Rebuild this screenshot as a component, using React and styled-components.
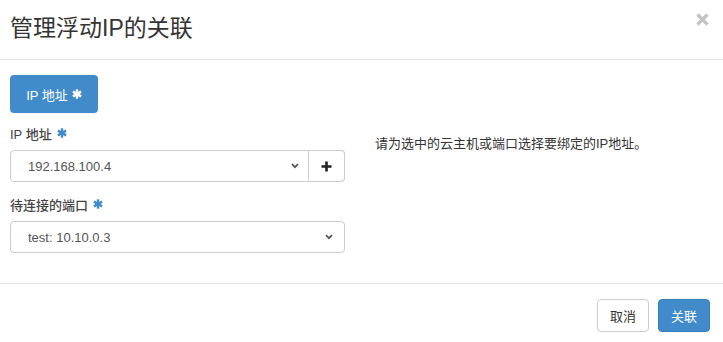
import React from "react";
import styled, { createGlobalStyle } from "styled-components";

const GlobalStyle = createGlobalStyle`
  html, body { margin: 0; padding: 0; background: #fff; }
  body {
    font-family: "Liberation Sans", "Noto Sans CJK SC", Arial, sans-serif;
    font-size: 13px;
    color: #333;
  }
  * { box-sizing: border-box; }
`;

const Modal = styled.div`
  width: 723px;
  background: #fff;
`;

const Header = styled.div`
  display: flex;
  justify-content: space-between;
  align-items: flex-start;
  height: 60px;
  padding: 13px 14px 0 10px;
  border-bottom: 1px solid #e5e5e5;
`;

const Title = styled.h4`
  margin: 0;
  font-size: 23px;
  line-height: 30px;
  font-weight: 400;
  color: #333;
`;

const Close = styled.button`
  display: flex;
  padding: 0;
  margin: 0;
  border: 0;
  background: transparent;
  cursor: pointer;
`;

const Body = styled.div`
  padding: 15px 10px 30px;
`;

const PillButton = styled.div`
  display: inline-flex;
  align-items: center;
  justify-content: center;
  gap: 4px;
  width: 88px;
  height: 38px;
  border-radius: 4px;
  background: #428bca;
  color: #fff;
  font-size: 13px;
`;

const Grid = styled.div`
  display: grid;
  grid-template-columns: 335px 1fr;
  column-gap: 30px;
  margin-top: 11px;
`;

const FormGroup = styled.div`
  margin-bottom: ${(p) => (p.$last ? 0 : 13)}px;
`;

const Label = styled.div`
  display: flex;
  align-items: center;
  gap: 5px;
  height: 18px;
  margin-bottom: 8px;
  font-weight: 500;
  color: #444;
  font-size: 13px;
`;

const InputGroup = styled.div`
  display: flex;
`;

const SelectBox = styled.div`
  flex: 1;
  display: flex;
  align-items: center;
  justify-content: space-between;
  height: 32px;
  padding: 0 ${(p) => (p.$grouped ? 9 : 11)}px 0 17px;
  border: 1px solid #ccc;
  border-radius: ${(p) => (p.$grouped ? "4px 0 0 4px" : "4px")};
  color: #555;
  font-size: 13px;
`;

const AddButton = styled.div`
  display: flex;
  align-items: center;
  justify-content: center;
  width: 36px;
  height: 32px;
  border: 1px solid #ccc;
  border-left: 0;
  border-radius: 0 4px 4px 0;
  background: #fff;
`;

const HelpText = styled.p`
  margin: 0;
  padding-top: 11px;
  line-height: 18px;
  font-size: 13px;
  color: #333;
`;

const Footer = styled.div`
  display: flex;
  justify-content: flex-end;
  gap: 9px;
  padding: 15px 13px 0 10px;
  border-top: 1px solid #e5e5e5;
`;

const Button = styled.button`
  width: 52px;
  height: 33px;
  padding: 0;
  border-radius: 4px;
  font-family: inherit;
  font-size: 13px;
  cursor: pointer;
  border: 1px solid ${(p) => (p.$primary ? "#357ebd" : "#ccc")};
  background: ${(p) => (p.$primary ? "#428bca" : "#fff")};
  color: ${(p) => (p.$primary ? "#fff" : "#333")};
`;

const Asterisk = ({ color = "#428bca", size = 10 }) => (
  <svg width={size} height={size} viewBox="0 0 10 10" aria-hidden="true">
    <g stroke={color} strokeWidth="2.4" strokeLinecap="butt">
      <line x1="5" y1="0.3" x2="5" y2="9.7" />
      <line x1="0.9" y1="2.6" x2="9.1" y2="7.4" />
      <line x1="0.9" y1="7.4" x2="9.1" y2="2.6" />
    </g>
  </svg>
);

const Chevron = () => (
  <svg width="8" height="6" viewBox="0 0 8 6" aria-hidden="true">
    <path d="M1 1.2 L4 4.2 L7 1.2" fill="none" stroke="#555" strokeWidth="1.7" />
  </svg>
);

const Plus = () => (
  <svg width="11" height="11" viewBox="0 0 11 11" aria-hidden="true">
    <path d="M5.5 0.5 V10.5 M0.5 5.5 H10.5" stroke="#222" strokeWidth="2.6" />
  </svg>
);

const CloseIcon = () => (
  <svg width="13" height="13" viewBox="0 0 13 13" aria-hidden="true">
    <path d="M1.5 1.5 L11.5 11.5 M11.5 1.5 L1.5 11.5" stroke="#c4c4c4" strokeWidth="3.4" />
  </svg>
);

export default function App() {
  return (
    <>
      <GlobalStyle />
      <Modal>
        <Header>
          <Title>管理浮动IP的关联</Title>
          <Close aria-label="关闭">
            <CloseIcon />
          </Close>
        </Header>
        <Body>
          <PillButton>
            IP 地址 <Asterisk color="#fff" />
          </PillButton>
          <Grid>
            <div>
              <FormGroup>
                <Label>
                  IP 地址 <Asterisk />
                </Label>
                <InputGroup>
                  <SelectBox $grouped>
                    <span>192.168.100.4</span>
                    <Chevron />
                  </SelectBox>
                  <AddButton>
                    <Plus />
                  </AddButton>
                </InputGroup>
              </FormGroup>
              <FormGroup $last>
                <Label>
                  待连接的端口 <Asterisk />
                </Label>
                <SelectBox>
                  <span>test: 10.10.0.3</span>
                  <Chevron />
                </SelectBox>
              </FormGroup>
            </div>
            <HelpText>请为选中的云主机或端口选择要绑定的IP地址。</HelpText>
          </Grid>
        </Body>
        <Footer>
          <Button>取消</Button>
          <Button $primary>关联</Button>
        </Footer>
      </Modal>
    </>
  );
}
